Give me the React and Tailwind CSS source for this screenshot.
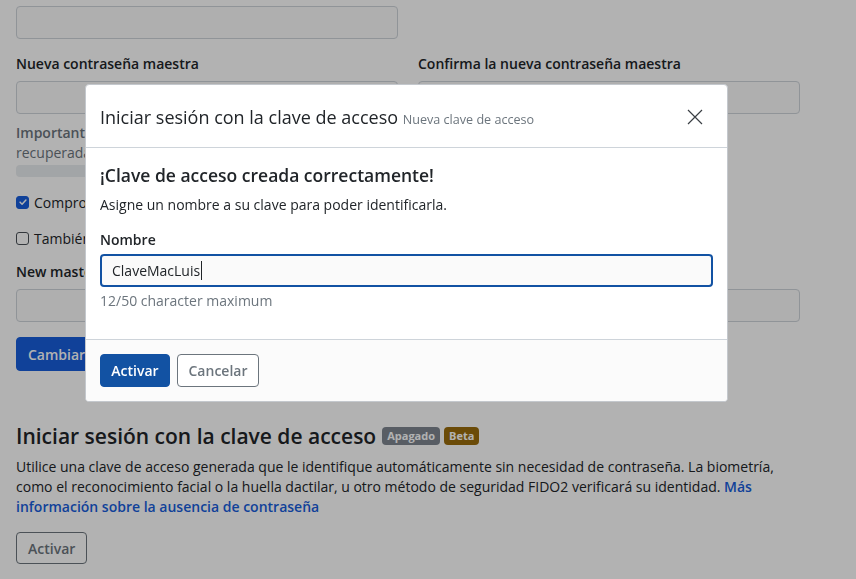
import React from "react";

function Checkbox({ checked }) {
  return (
    <span
      className={`inline-flex h-[13px] w-[13px] shrink-0 items-center justify-center rounded-[3px] border ${
        checked ? "border-[#175ddc] bg-[#175ddc]" : "border-[#495057] bg-white"
      }`}
    >
      {checked && (
        <svg viewBox="0 0 12 12" className="h-[10px] w-[10px]">
          <path d="M2.5 6.2l2.4 2.4 4.6-5" fill="none" stroke="#fff" strokeWidth="1.8" strokeLinecap="round" strokeLinejoin="round" />
        </svg>
      )}
    </span>
  );
}

function Field({ label }) {
  return (
    <div>
      <div className="mb-[7px] text-[14px] font-semibold leading-[21px]">{label}</div>
      <div className="h-[33px] rounded-[4px] border border-[#ced4da] bg-[#fbfbfb]" />
    </div>
  );
}

export default function App() {
  return (
    <div
      className="relative h-[579px] overflow-hidden bg-white text-[#212529]"
      style={{ fontFamily: '"Open Sans", "Liberation Sans", sans-serif' }}
    >
      {/* page behind the dialog */}
      <div className="ml-4 w-[784px] pt-[6px] text-[14px]">
        <div className="grid grid-cols-2 gap-5">
          <div className="h-[33px] rounded-[4px] border border-[#ced4da] bg-[#fbfbfb]" />
        </div>

        <div className="mt-[14px] grid grid-cols-2 gap-5">
          <div>
            <Field label="Nueva contraseña maestra" />
            <p className="mt-[9px] leading-[20px] text-[#6c757d]">
              <span className="font-semibold">Importante:</span> Su contraseña maestra no puede ser
              recuperada si la olvida. Mínimo 12 caracteres.
            </p>
            <div className="mt-[2px] h-[12px] rounded-[4px] bg-[#e9ecef]" />
          </div>
          <Field label="Confirma la nueva contraseña maestra" />
        </div>

        <label className="mt-[15px] flex h-[20px] items-center gap-[5px]">
          <Checkbox checked />
          <span>Comprobar filtraciones de datos conocidas para esta contraseña</span>
        </label>
        <label className="mt-[16px] flex h-[20px] items-center gap-[5px]">
          <Checkbox />
          <span>También rotar la clave de cifrado de mi cuenta</span>
        </label>

        <div className="mt-[13px]">
          <Field label="New master password hint" />
        </div>

        <button className="mt-[15px] h-[34px] rounded-[4px] border border-[#175ddc] bg-[#175ddc] px-[11px] font-semibold text-white">
          Cambiar contraseña maestra
        </button>

        <h2 className="mt-[51px] flex items-center gap-[4px] text-[21px] font-semibold leading-[28px]">
          <span className="mr-[2px]">Iniciar sesión con la clave de acceso</span>
          <span className="inline-flex h-[18px] items-center rounded-[4px] bg-[#7e8690] px-[5px] text-[11px] font-bold text-white">
            Apagado
          </span>
          <span className="inline-flex h-[18px] items-center rounded-[4px] bg-[#9a6c0c] px-[5px] text-[11px] font-bold text-white">
            Beta
          </span>
        </h2>
        <p className="mt-[7px] leading-[20px]">
          Utilice una clave de acceso generada que le identifique automáticamente sin necesidad de
          contraseña. La biometría, como el reconocimiento facial o la huella dactilar, u otro método
          de seguridad FIDO2 verificará su identidad.{" "}
          <a className="font-semibold text-[#175ddc]">Más información sobre la ausencia de contraseña</a>
        </p>
        <button className="mt-[15px] h-[32px] rounded-[4px] border border-[#6c757d] bg-white px-[11px] font-semibold text-[#6c757d]">
          Activar
        </button>
      </div>

      {/* backdrop */}
      <div className="fixed inset-0 bg-black/30" />

      {/* dialog */}
      <div className="fixed left-[85px] top-[84px] w-[643px] overflow-hidden rounded-[4px] border border-[#c4c8cd] bg-white text-[14px]">
        <div className="flex items-center border-b border-[#ced4da] pl-[14px] pr-[24px] pb-[14px] pt-[19px]">
          <h5 className="flex-1 text-[18px] leading-[27px]">
            Iniciar sesión con la clave de acceso{" "}
            <small className="text-[12.6px] text-[#6c757d]">Nueva clave de acceso</small>
          </h5>
          <button className="-mt-[3px] flex h-[16px] w-[16px] items-center justify-center">
            <svg viewBox="0 0 16 16" className="h-[16px] w-[16px]">
              <path d="M1 1L15 15M15 1L1 15" stroke="#3a3f44" strokeWidth="1.2" fill="none" />
            </svg>
          </button>
        </div>

        <div className="px-[14px] pt-[14px] pb-[28px]">
          <h3 className="text-[17.5px] font-semibold leading-[26px]">
            ¡Clave de acceso creada correctamente!
          </h3>
          <p className="mt-[7px] leading-[20px]">Asigne un nombre a su clave para poder identificarla.</p>
          <div className="mt-[14px] text-[14px] font-semibold leading-[21px]">Nombre</div>
          <div className="mt-[4px] flex h-[33px] items-center rounded-[4px] border-2 border-[#1252a3] bg-[#fafafa] px-[10px]">
            <span>ClaveMacLuis</span>
            <span className="ml-[1px] h-[19px] w-px bg-[#212529]" />
          </div>
          <div className="mt-[4px] leading-[20px] text-[#6c757d]">12/50 character maximum</div>
        </div>

        <div className="flex gap-[7px] border-t border-[#ced4da] bg-[#fbfbfb] px-[14px] py-[14px]">
          <button className="h-[33px] w-[70px] rounded-[4px] border border-[#1252a3] bg-[#1252a3] font-semibold text-white">
            Activar
          </button>
          <button className="h-[33px] w-[82px] rounded-[4px] border border-[#6c757d] bg-white font-semibold text-[#6c757d]">
            Cancelar
          </button>
        </div>
      </div>
    </div>
  );
}
